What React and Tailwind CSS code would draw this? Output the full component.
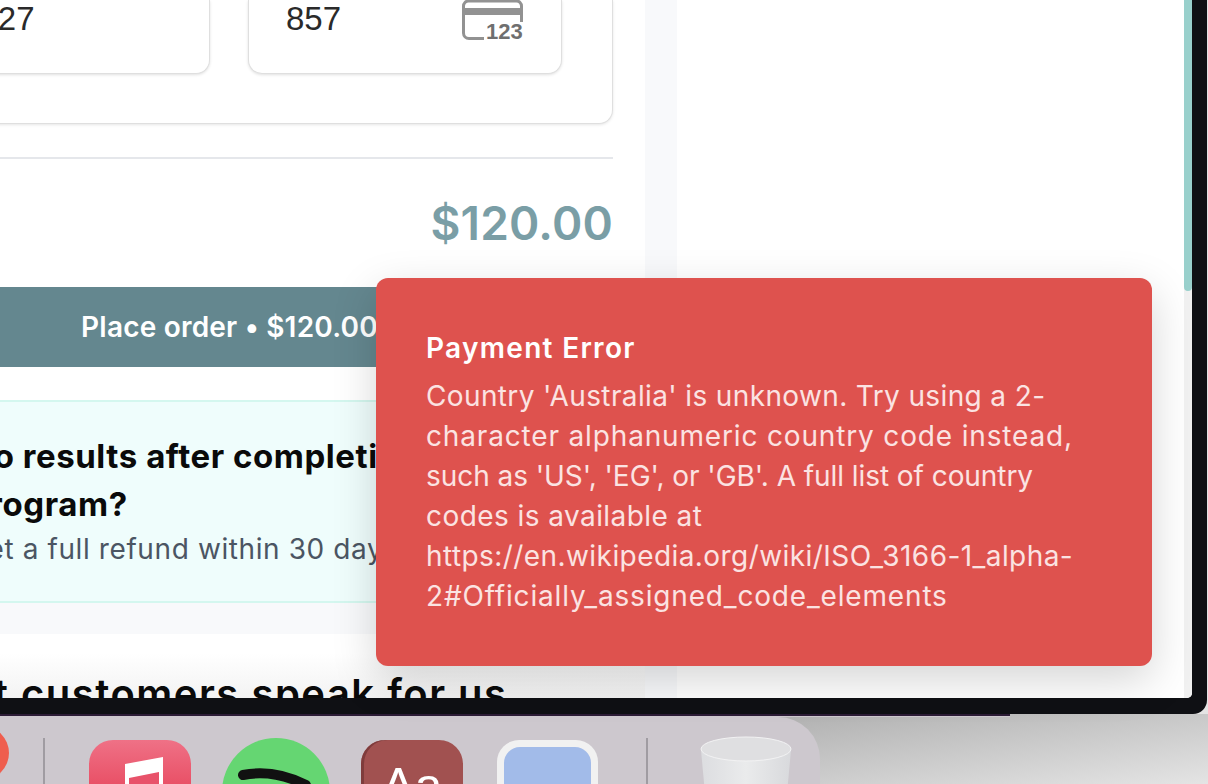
import React from "react";

const sans = "font-['Inter','Noto_Sans',sans-serif]";

function CvcIcon() {
  return (
    <svg width="62" height="42" viewBox="0 0 62 42" className="shrink-0">
      <path d="M22 38.5H7a5.5 5.5 0 0 1-5.5-5.500V6A5 5 0 0 1 6.500 1H54.500a5 5 0 0 1 5 5V22" fill="none" stroke="#929292" strokeWidth="3" />
      <rect x="1" y="8" width="59" height="7" fill="#929292" />
      <text x="24" y="39" fontFamily="'Liberation Sans',sans-serif" fontWeight="700" fontSize="22" fill="#6f6f6f">123</text>
    </svg>
  );
}

function Field({ value, left }) {
  return (
    <div className={`w-[314px] h-[74px] bg-white border border-t-0 border-[#dfdfdf] rounded-b-[14px] shadow-[0_1px_3px_rgba(0,0,0,0.12)] flex justify-between pr-[37px] ${left}`}>
      <span className="font-['Liberation_Sans',sans-serif] text-[33px] leading-[38px] text-[#2a2a2a]">{value}</span>
      {value === "857" ? <CvcIcon /> : null}
    </div>
  );
}

function Dock() {
  return (
    <div className="w-[820px] h-[67px] bg-[#cdc8ce] rounded-tr-[42px] flex items-start overflow-hidden">
      <div className="w-[54px] h-[54px] -ml-[45px] mt-[9px] rounded-full bg-[#ef5e4e] shrink-0" />
      <div className="w-[2px] h-[46px] ml-[34px] mt-[21px] bg-[#a09ca2] shrink-0" />
      <svg width="102" height="102" viewBox="0 0 102 102" className="ml-[44px] mt-[23px] shrink-0">
        <defs>
          <linearGradient id="m" x1="0" y1="0" x2="0" y2="1">
            <stop offset="0" stopColor="#ef7186" />
            <stop offset="0.5" stopColor="#e84c62" />
          </linearGradient>
        </defs>
        <rect width="102" height="102" rx="24" fill="url(#m)" />
        <path d="M36 24L74 17V60H36Z" fill="#fff" />
        <path d="M40 38L70 32V60H40Z" fill="#e8526a" />
      </svg>
      <svg width="108" height="108" viewBox="0 0 108 108" className="ml-[31px] mt-[21px] shrink-0">
        <circle cx="54" cy="54" r="54" fill="#65d672" />
        <path d="M21 37Q52 31 84 47" fill="none" stroke="#111" strokeWidth="10" strokeLinecap="round" />
      </svg>
      <div className="w-[102px] h-[102px] ml-[31px] mt-[23px] rounded-[24px] bg-[#a15150] shadow-[inset_3px_0_0_#7f3c3c] shrink-0 text-center">
        <span className="font-['Liberation_Sans',sans-serif] text-[50px] leading-[50px] text-white block pt-[21px]">Aa</span>
      </div>
      <div className="w-[101px] h-[101px] ml-[34px] mt-[23px] rounded-[22px] bg-[#f1f1f1] p-[7px] shrink-0">
        <div className="w-full h-full rounded-[16px] bg-[#a2bbe9]" />
      </div>
      <div className="w-[2px] h-[46px] ml-[48px] mt-[21px] bg-[#a09ca2] shrink-0" />
      <svg width="92" height="90" viewBox="0 0 92 90" className="ml-[52px] mt-[19px] shrink-0">
        <defs>
          <linearGradient id="t" x1="0" y1="0" x2="1" y2="0">
            <stop offset="0" stopColor="#dcdde0" />
            <stop offset="0.5" stopColor="#eaebec" />
            <stop offset="1" stopColor="#d8d9dc" />
          </linearGradient>
        </defs>
        <path d="M1 14L8 90H84L91 14Z" fill="url(#t)" />
        <ellipse cx="46" cy="13" rx="45" ry="12" fill="#dfdfe1" stroke="#f2f2f3" strokeWidth="1" />
      </svg>
    </div>
  );
}

export default function App() {
  return (
    <div className={`relative w-[1208px] h-[784px] overflow-hidden flex flex-col bg-[#e4e4e4] ${sans}`}>
      <div className="w-[1207px] h-[714px] shrink-0 bg-[#0f1014] rounded-br-[14px] pr-[15px] pb-[16px]">
        <div className="h-[698px] flex overflow-hidden rounded-br-[5px] bg-white">
          <div className="w-[645px] shrink-0 h-full flex flex-col overflow-hidden bg-white">
            <div className="-ml-[154px] w-[767px] shrink-0">
              <div className="h-[124px] bg-white border border-t-0 border-[#dfdfdf] rounded-b-[14px] shadow-[0_1px_3px_rgba(0,0,0,0.1)] flex gap-[38px] px-[49px]">
                <Field value="12/27" left="pl-[55px]" />
                <Field value="857" left="pl-[37px]" />
              </div>
              <div className="mt-[33px] h-[2px] bg-[#e5e7eb]" />
              <div className="h-[128px] flex justify-end pt-[36px]">
                <span className="text-[46px] leading-[56px] font-semibold text-[#7a9ea6] tracking-[0.2px]">$120.00</span>
              </div>
              <button className="w-full h-[80px] bg-[#64878f] text-white text-[28px] font-semibold tracking-[0.2px] block">Place order • $120.00</button>
              <div className="mt-[33px] h-[203px] bg-[#effdfc] border-y-2 border-[#d4f7ef] pl-[122px] pt-[30px] whitespace-nowrap">
                <div className="text-[33px] leading-[48px] font-bold text-[#0a0a0a] tracking-[0.55px]">No results after completing the</div>
                <div className="text-[33px] leading-[48px] font-bold text-[#0a0a0a] tracking-[0.55px]">program?</div>
                <div className="text-[28px] leading-[42px] text-[#4b5563] tracking-[0.6px] -ml-[2px]">Get a full refund within 30 days</div>
              </div>
            </div>
            <div className="h-[31px] shrink-0 bg-[#f8f9fb]" />
            <div className="flex-1 bg-[linear-gradient(180deg,#ffffff_30%,#f3f3f3_100%)] whitespace-nowrap overflow-hidden">
              <div className="-ml-[99px] pt-[36px] text-[40px] leading-[48px] font-semibold text-[#0a0a0a] tracking-[1.5px]">What customers speak for us</div>
            </div>
          </div>
          <div className="w-[32px] shrink-0 h-full bg-[#f8f9fb]" />
          <div className="flex-1 h-full bg-white" />
          <div className="w-[8px] shrink-0 h-full bg-[#f1f1f1]">
            <div className="h-[291px] bg-[#99d0cc] rounded-b-[4px]" />
          </div>
        </div>
      </div>
      <div className="flex-1 min-h-0 bg-[linear-gradient(172deg,#8f8f8f_0%,#a6a6a6_35%,#e4e4e4_100%)]">
        <div className="w-[1010px] h-[3px] bg-[linear-gradient(180deg,#2c1c36_50%,#cdc8ce_50%)]" />
        <Dock />
      </div>

      <div className="absolute left-[376px] top-[278px] w-[776px] h-[388px] rounded-[12px] bg-[#de524e] pl-[50px] pt-[50px] shadow-[0_14px_44px_rgba(0,0,0,0.17)] whitespace-nowrap">
        <div className="text-[28px] leading-[40px] font-semibold text-white mb-[8px] tracking-[1.3px]">Payment Error</div>
        <div className="text-[28px] leading-[40px] text-[#fbe3e2]">
          <span className="tracking-[0.37px]">Country 'Australia' is unknown. Try using a 2-</span><br />
          <span className="tracking-[0.84px]">character alphanumeric country code instead,</span><br />
          <span className="tracking-[-0.06px]">such as 'US', 'EG', or 'GB'. A full list of country</span><br />
          <span className="tracking-[0.43px]">codes is available at</span><br />
          <span className="tracking-[0.43px]">https://en.wikipedia.org/wiki/ISO_3166-1_alpha-</span><br />
          <span className="tracking-[0.83px]">2#Officially_assigned_code_elements</span>
        </div>
      </div>
    </div>
  );
}
